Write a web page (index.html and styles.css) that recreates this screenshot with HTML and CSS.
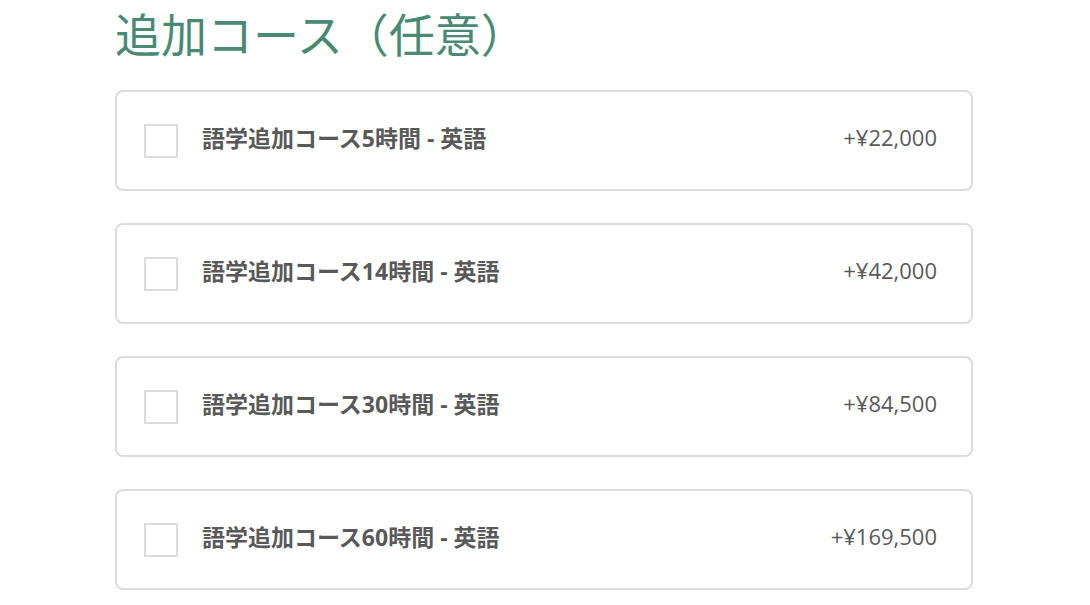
FILE: index.html
```html
<!DOCTYPE html>
<html lang="ja">
<head>
<meta charset="utf-8">
<link rel="stylesheet" href="styles.css">
</head>
<body>
<div class="wrap">
  <h2 class="title">追加コース（任意）</h2>
  <div class="list">
    <label class="card"><span class="box"></span><span class="name">語学追加コース5時間 - 英語</span><span class="price">+¥22,000</span></label>
    <label class="card"><span class="box"></span><span class="name">語学追加コース14時間 - 英語</span><span class="price">+¥42,000</span></label>
    <label class="card"><span class="box"></span><span class="name">語学追加コース30時間 - 英語</span><span class="price">+¥84,500</span></label>
    <label class="card"><span class="box"></span><span class="name">語学追加コース60時間 - 英語</span><span class="price">+¥169,500</span></label>
  </div>
</div>
</body>
</html>
```
FILE: styles.css
```css
html, body { margin: 0; padding: 0; background: #fff; }
body { font-family: "Open Sans", "Noto Sans CJK JP", sans-serif; }
.wrap { width: 858px; margin-left: 115px; }
.title {
  margin: 0 0 29px;
  padding-top: 3px;
  font-family: "Noto Sans CJK JP", sans-serif;
  font-weight: 400;
  font-size: 46px;
  line-height: 58px;
  color: #4a8a74;
  white-space: nowrap;
}
.list { display: flex; flex-direction: column; gap: 32px; }
.card {
  display: flex;
  align-items: center;
  height: 101px;
  box-sizing: border-box;
  border: 2px solid #dcdcdc;
  border-radius: 8px;
  padding: 0 34px 0 27px;
}
.box {
  width: 34px; height: 34px;
  box-sizing: border-box;
  border: 2px solid #dcdcdc;
  flex: none;
}
.name {
  margin-left: 24px;
  margin-bottom: 7px;
  font-family: "Open Sans", "Noto Sans CJK JP", sans-serif;
  font-weight: 700;
  font-size: 23px;
  color: #595959;
  flex: 1;
}
.price {
  margin-bottom: 7px;
  font-family: "Open Sans", sans-serif;
  font-size: 22px;
  color: #5a5a5a;
}
```
